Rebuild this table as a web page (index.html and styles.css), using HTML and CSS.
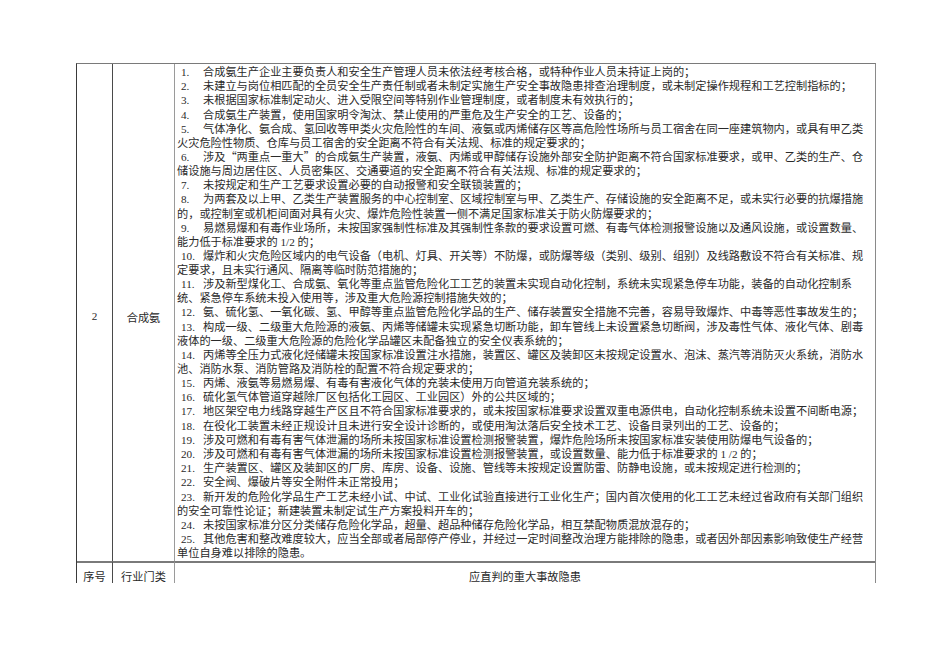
FILE: index.html
```html
<!DOCTYPE html>
<html lang="zh-CN">
<head>
<meta charset="utf-8">
<title>合成氨重大事故隐患</title>
<link rel="stylesheet" href="styles.css">
</head>
<body>
<div class="sheet">
  <div class="cell c-no row-main"><span class="lat">2</span></div>
  <div class="cell c-cat row-main">合成氨</div>
  <div class="cell c-txt row-main">
    <div class="list">
      <p class="item"><span class="num">1.</span>合成氨生产企业主要负责人和安全生产管理人员未依法经考核合格，或特种作业人员未持证上岗的；</p>
      <p class="item"><span class="num">2.</span>未建立与岗位相匹配的全员安全生产责任制或者未制定实施生产安全事故隐患排查治理制度，或未制定操作规程和工艺控制指标的；</p>
      <p class="item"><span class="num">3.</span>未根据国家标准制定动火、进入受限空间等特别作业管理制度，或者制度未有效执行的；</p>
      <p class="item"><span class="num">4.</span>合成氨生产装置，使用国家明令淘汰、禁止使用的严重危及生产安全的工艺、设备的；</p>
      <p class="item"><span class="num">5.</span>气体净化、氨合成、氢回收等甲类火灾危险性的车间、液氨或丙烯储存区等高危险性场所与员工宿舍在同一座建筑物内，或具有甲乙类<br>火灾危险性物质、仓库与员工宿舍的安全距离不符合有关法规、标准的规定要求的；</p>
      <p class="item"><span class="num">6.</span>涉及<span class="q ql">“</span>两重点一重大<span class="q qr">”</span>的合成氨生产装置，液氨、丙烯或甲醇储存设施外部安全防护距离不符合国家标准要求，或甲、乙类的生产、仓<br>储设施与周边居住区、人员密集区、交通要道的安全距离不符合有关法规、标准的规定要求的；</p>
      <p class="item"><span class="num">7.</span>未按规定和生产工艺要求设置必要的自动报警和安全联锁装置的；</p>
      <p class="item"><span class="num">8.</span>为两套及以上甲、乙类生产装置服务的中心控制室、区域控制室与甲、乙类生产、存储设施的安全距离不足，或未实行必要的抗爆措施<br>的，或控制室或机柜间面对具有火灾、爆炸危险性装置一侧不满足国家标准关于防火防爆要求的；</p>
      <p class="item"><span class="num">9.</span>易燃易爆和有毒作业场所，未按国家强制性标准及其强制性条款的要求设置可燃、有毒气体检测报警设施以及通风设施，或设置数量、<br>能力低于标准要求的<span class="lat"> 1/2 </span>的；</p>
      <p class="item"><span class="num">10.</span>爆炸和火灾危险区域内的电气设备（电机、灯具、开关等）不防爆，或防爆等级（类别、级别、组别）及线路敷设不符合有关标准、规<br>定要求，且未实行通风、隔离等临时防范措施的；</p>
      <p class="item"><span class="num">11.</span>涉及新型煤化工、合成氨、氧化等重点监管危险化工工艺的装置未实现自动化控制，系统未实现紧急停车功能，装备的自动化控制系<br>统、紧急停车系统未投入使用等，涉及重大危险源控制措施失效的；</p>
      <p class="item"><span class="num">12.</span>氨、硫化氢、一氧化碳、氢、甲醇等重点监管危险化学品的生产、储存装置安全措施不完善，容易导致爆炸、中毒等恶性事故发生的；</p>
      <p class="item"><span class="num">13.</span>构成一级、二级重大危险源的液氨、丙烯等储罐未实现紧急切断功能，卸车管线上未设置紧急切断阀，涉及毒性气体、液化气体、剧毒<br>液体的一级、二级重大危险源的危险化学品罐区未配备独立的安全仪表系统的；</p>
      <p class="item"><span class="num">14.</span>丙烯等全压力式液化烃储罐未按国家标准设置注水措施，装置区、罐区及装卸区未按规定设置水、泡沫、蒸汽等消防灭火系统，消防水<br>池、消防水泵、消防管路及消防栓的配置不符合规定要求的；</p>
      <p class="item"><span class="num">15.</span>丙烯、液氨等易燃易爆、有毒有害液化气体的充装未使用万向管道充装系统的；</p>
      <p class="item"><span class="num">16.</span>硫化氢气体管道穿越除厂区包括化工园区、工业园区）外的公共区域的；</p>
      <p class="item"><span class="num">17.</span>地区架空电力线路穿越生产区且不符合国家标准要求的，或未按国家标准要求设置双重电源供电，自动化控制系统未设置不间断电源；</p>
      <p class="item"><span class="num">18.</span>在役化工装置未经正规设计且未进行安全设计诊断的，或使用淘汰落后安全技术工艺、设备目录列出的工艺、设备的；</p>
      <p class="item"><span class="num">19.</span>涉及可燃和有毒有害气体泄漏的场所未按国家标准设置检测报警装置，爆炸危险场所未按国家标准安装使用防爆电气设备的；</p>
      <p class="item"><span class="num">20.</span>涉及可燃和有毒有害气体泄漏的场所未按国家标准设置检测报警装置，或设置数量、能力低于标准要求的<span class="lat"> 1 /2 </span>的；</p>
      <p class="item"><span class="num">21.</span>生产装置区、罐区及装卸区的厂房、库房、设备、设施、管线等未按规定设置防雷、防静电设施，或未按规定进行检测的；</p>
      <p class="item"><span class="num">22.</span>安全阀、爆破片等安全附件未正常投用；</p>
      <p class="item"><span class="num">23.</span>新开发的危险化学品生产工艺未经小试、中试、工业化试验直接进行工业化生产；国内首次使用的化工工艺未经过省政府有关部门组织<br>的安全可靠性论证；新建装置未制定试生产方案投料开车的；</p>
      <p class="item"><span class="num">24.</span>未按国家标准分区分类储存危险化学品，超量、超品种储存危险化学品，相互禁配物质混放混存的；</p>
      <p class="item"><span class="num">25.</span>其他危害和整改难度较大，应当全部或者局部停产停业，并经过一定时间整改治理方能排除的隐患，或者因外部因素影响致使生产经营<br>单位自身难以排除的隐患。</p>
    </div>
  </div>
  <div class="cell c-no row-head">序号</div>
  <div class="cell c-cat row-head">行业门类</div>
  <div class="cell c-txt row-head">应直判的重大事故隐患</div>
</div>
</body>
</html>
```

FILE: styles.css
```css
html, body {
  margin: 0;
  padding: 0;
  background: #ffffff;
}

body {
  font-family: "Noto Sans CJK SC", "Noto Sans CJK JP", sans-serif;
  font-size: 11.2px;
  line-height: 14px;
  color: #2a2a2a;
}

.sheet {
  box-sizing: border-box;
  width: 800px;
  margin: 63px 0 0 76px;
  display: grid;
  grid-template-columns: 36px 62px 700px;
  grid-template-rows: 497px 22px;
  border-left: 1px solid #3a3a3a;
  border-top: 1px solid #7a7a7a;
  border-right: 1px solid #8a8a8a;
}

.cell {
  box-sizing: border-box;
  min-width: 0;
}

.c-no {
  border-right: 1px solid #4a4a4a;
}

.c-cat {
  border-right: 1px solid #9a9a9a;
}

.row-main.c-no,
.row-main.c-cat {
  display: flex;
  align-items: center;
  justify-content: center;
  padding-top: 8px;
}

.c-txt.row-main {
  padding-left: 2px;
}

.list {
  width: 690px;
}

.item {
  margin: 0;
}

.num {
  display: inline-block;
  width: 26px;
  padding-left: 4px;
  box-sizing: border-box;
  font-family: "Liberation Serif", serif;
  line-height: 1;
}

.lat {
  font-family: "Liberation Serif", serif;
  line-height: 1;
}

.q {
  display: inline-block;
  width: 1em;
  line-height: 1;
}

.ql {
  text-align: right;
}

.qr {
  text-align: left;
}

.row-head {
  border-top: 2px solid #7a7a7a;
  padding-top: 7px;
  line-height: 13px;
  text-align: center;
  overflow: hidden;
  white-space: nowrap;
}
```
